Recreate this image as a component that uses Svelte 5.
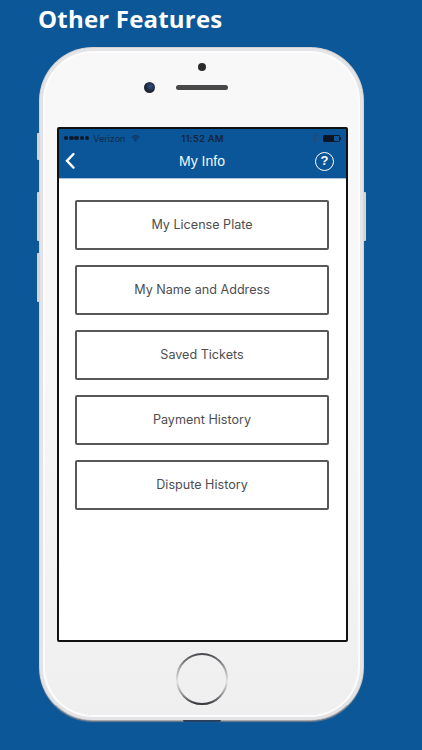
<script>
	const items = ['My License Plate', 'My Name and Address', 'Saved Tickets', 'Payment History', 'Dispute History'];
</script>

<div class="page">
	<h1>Other Features</h1>

	<div class="phone">
		<span class="side vol-mute"></span>
		<span class="side vol-up"></span>
		<span class="side vol-down"></span>
		<span class="side power"></span>
		<span class="foot"></span>

		<div class="top">
			<span class="sensor"></span>
			<div class="ear-row">
				<span class="camera"></span>
				<span class="speaker"></span>
			</div>
		</div>

		<div class="screen">
			<header>
				<div class="status">
					<div class="carrier">
						<span class="dots">
							{#each Array(5) as _}<i></i>{/each}
						</span>
						<span>Verizon</span>
						<svg width="9" height="7" viewBox="0 0 9 7">
							<path d="M0.6 2.4a5.4 5.4 0 0 1 7.8 0M2 3.8a3.4 3.4 0 0 1 5 0" fill="none" stroke="#12294a" stroke-width="1" />
							<path d="M3.2 5a1.8 1.8 0 0 1 2.6 0L4.5 6.6z" fill="#12294a" />
						</svg>
					</div>
					<div class="time">11:52 AM</div>
					<div class="battery-side">
						<svg width="6" height="10" viewBox="0 0 6 10">
							<path d="M0.6 2.8 5 7 2.9 9.2V0.8L5 3 0.6 7.2" fill="none" stroke="#28496e" stroke-width="0.9" />
						</svg>
						<span class="battery"><b></b></span>
						<span class="nub"></span>
					</div>
				</div>
				<div class="nav">
					<svg class="back" width="12" height="18" viewBox="0 0 12 18">
						<path d="M9.5 2 3 8.8l6.5 6.8" fill="none" stroke="#fff" stroke-width="2.4" stroke-linecap="round" />
					</svg>
					<div class="title">My Info</div>
					<span class="help">?</span>
				</div>
			</header>

			<div class="list">
				{#each items as item}
					<button type="button">{item}</button>
				{/each}
			</div>
		</div>

		<div class="bottom">
			<svg width="52" height="52" viewBox="0 0 52 52">
				<defs>
					<linearGradient id="ring" x1="0" y1="0" x2="0" y2="1">
						<stop offset="0" stop-color="#4a4a4e" />
						<stop offset="0.3" stop-color="#a9a9ad" />
						<stop offset="0.55" stop-color="#e4e4e6" />
						<stop offset="0.8" stop-color="#9a9a9e" />
						<stop offset="1" stop-color="#38383c" />
					</linearGradient>
				</defs>
				<circle cx="26" cy="26" r="25" fill="none" stroke="url(#ring)" stroke-width="2" />
			</svg>
		</div>
	</div>
</div>

<style>
	:global(body) {
		margin: 0;
		background: #0b5797;
	}

	.page {
		width: 422px;
		height: 750px;
		overflow: hidden;
		background: #0b5797;
		font-family: 'Inter', 'Liberation Sans', sans-serif;
	}

	h1 {
		margin: 0;
		height: 47px;
		padding: 2px 0 0 38px;
		box-sizing: border-box;
		font-family: 'Open Sans', sans-serif;
		font-weight: 700;
		font-size: 24px;
		line-height: 33px;
		letter-spacing: 0.2px;
		color: #fff;
	}

	.phone {
		position: relative;
		width: 325px;
		height: 674px;
		margin-left: 39px;
		box-sizing: border-box;
		border-radius: 54px;
		background: linear-gradient(#f8f8f8, #f8f8f8 40%, #efeff0);
		border: 1px solid #d2d2d4;
		border-bottom-color: #a9a9ac;
		box-shadow:
			inset 0 0 0 3px #e4e4e6,
			inset 0 0 0 5px #fcfcfc,
			inset 0 -3px 0 2px #d6d6d8,
			0 1px 1px #6f7d8b;
		display: flex;
		flex-direction: column;
		align-items: center;
	}

	.side {
		position: absolute;
		width: 3px;
		background: #d4d5d8;
		border-radius: 1px;
	}
	.vol-mute {
		left: -3px;
		top: 85px;
		height: 27px;
	}
	.vol-up {
		left: -3px;
		top: 144px;
		height: 49px;
	}
	.vol-down {
		left: -3px;
		top: 205px;
		height: 49px;
	}
	.power {
		right: -3px;
		top: 144px;
		height: 49px;
	}

	.foot {
		position: absolute;
		left: 143px;
		bottom: -2px;
		width: 38px;
		height: 2px;
		border-radius: 0 0 2px 2px;
		background: #27415e;
	}

	.top {
		height: 79px;
		width: 100%;
		flex: none;
		display: flex;
		flex-direction: column;
		align-items: center;
		padding-top: 15px;
		box-sizing: border-box;
	}

	.sensor {
		width: 8px;
		height: 8px;
		border-radius: 50%;
		background: #2a2a2c;
	}

	.ear-row {
		position: relative;
		margin-top: 14px;
	}

	.speaker {
		display: block;
		width: 52px;
		height: 5px;
		border-radius: 3px;
		background: #48484b;
	}

	.camera {
		position: absolute;
		left: -32px;
		top: -3px;
		width: 11px;
		height: 11px;
		border-radius: 50%;
		background: radial-gradient(circle at 60% 40%, #2f4f86, #1c2230 60%, #3a3a3c);
	}

	.screen {
		width: 291px;
		height: 515px;
		flex: none;
		margin-left: 2px;
		box-sizing: border-box;
		border: 2px solid #111;
		border-radius: 2px;
		background: #fff;
		display: flex;
		flex-direction: column;
	}

	header {
		background: #0a5699;
		height: 49px;
		flex: none;
		border-bottom: 1px solid #a9c2d8;
	}

	.status {
		height: 16px;
		display: grid;
		grid-template-columns: 1fr auto 1fr;
		align-items: center;
		padding: 1px 5px 0 5px;
		font-size: 9px;
	}

	.carrier {
		display: flex;
		align-items: center;
		gap: 4px;
		color: #12294a;
	}
	.carrier svg {
		margin-left: 2px;
	}

	.dots {
		display: flex;
		gap: 0.8px;
	}
	.dots i {
		width: 4.4px;
		height: 4.4px;
		border-radius: 50%;
		background: #0e1a2a;
	}

	.time {
		font-size: 9.5px;
		font-weight: 600;
		color: #14253a;
		letter-spacing: 0.2px;
	}

	.battery-side {
		display: flex;
		justify-content: flex-end;
		align-items: center;
	}
	.battery-side svg {
		margin-right: 5px;
	}

	.battery {
		width: 17px;
		height: 7px;
		box-sizing: border-box;
		border: 0.5px solid #0d1a2a;
		border-radius: 1px;
		display: block;
	}
	.battery b {
		display: block;
		width: 10px;
		height: 100%;
		background: #0b1420;
	}

	.nub {
		width: 1px;
		height: 3px;
		background: #0d1a2a;
	}

	.nav {
		height: 33px;
		display: grid;
		grid-template-columns: 1fr auto 1fr;
		align-items: center;
		padding: 0 12px 3px 5px;
		box-sizing: border-box;
		color: #fff;
	}

	.back {
		display: block;
	}

	.title {
		font-size: 14px;
		color: #f2f6fa;
		font-family: 'Liberation Sans', sans-serif;
		margin-left: 6px;
	}

	.help {
		justify-self: end;
		width: 19px;
		height: 19px;
		box-sizing: border-box;
		border: 1.6px solid #fff;
		border-radius: 50%;
		font-size: 13px;
		font-weight: 700;
		line-height: 16px;
		text-align: center;
		font-family: 'Liberation Sans', sans-serif;
	}

	.list {
		display: flex;
		flex-direction: column;
		gap: 15px;
		padding: 21px 17px 0 16px;
	}

	button {
		height: 50px;
		box-sizing: border-box;
		border: 2px solid #58585a;
		border-radius: 2px;
		background: #fff;
		font-family: 'Inter', 'Liberation Sans', sans-serif;
		font-size: 12.6px;
		color: #4e4e50;
		padding: 0 0 1px;
	}

	.bottom {
		flex: 1;
		width: 100%;
		display: flex;
		justify-content: center;
		align-items: flex-start;
		padding-top: 11px;
		box-sizing: border-box;
	}
</style>
